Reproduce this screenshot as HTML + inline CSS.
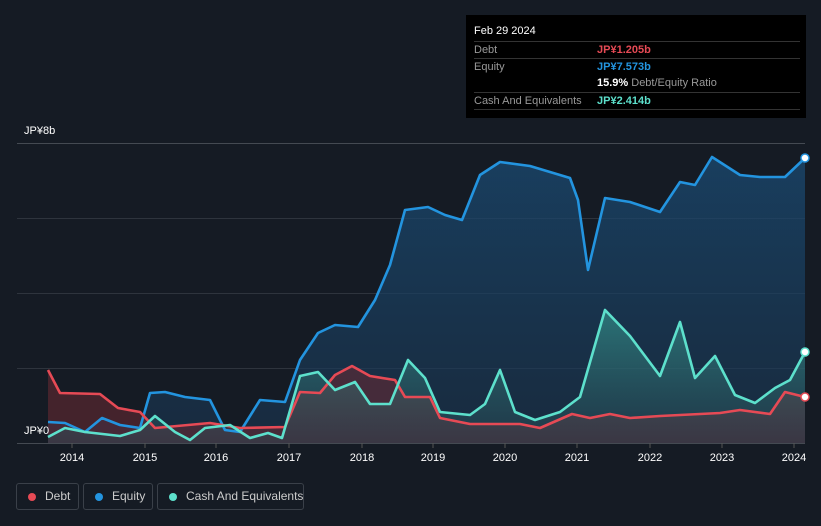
<!DOCTYPE html>
<html><head><style>
body{margin:0;width:821px;height:526px;background:#151b24;font-family:"Liberation Sans",sans-serif;overflow:hidden;position:relative}
.tt{position:absolute;left:466px;top:15px;width:340px;height:103px;background:#000;color:#fff;font-size:11px}
.tt .r{position:absolute;left:8px;right:6px;height:17px;border-top:1px solid #333;line-height:17px}
.tt .l{color:#999;position:absolute;left:0}
.tt .v{position:absolute;left:123px;font-weight:bold;white-space:nowrap}
.leg{position:absolute;top:483px;height:27px;border:1px solid #3a4049;border-radius:3px;color:#ccc;font-size:12px;line-height:25px;box-sizing:border-box;white-space:nowrap}
.leg i{position:absolute;left:11px;top:9px;width:8px;height:8px;border-radius:50%}
.leg span{position:absolute;left:28px;white-space:nowrap}
.ax{position:absolute;color:#fff;font-size:11px}
</style></head><body>
<svg width="821" height="526" style="position:absolute;left:0;top:0">
<defs>
<linearGradient id="ge" x1="0" y1="0" x2="0" y2="1"><stop offset="0" stop-color="#1a4a72" stop-opacity=".75"/><stop offset="1" stop-color="#1a3550" stop-opacity=".6"/></linearGradient>
<linearGradient id="gc" x1="0" y1="0" x2="0" y2="1"><stop offset="0" stop-color="#3aa89a" stop-opacity=".55"/><stop offset="1" stop-color="#2a4a55" stop-opacity=".4"/></linearGradient>
</defs>
<g stroke="#2e343d" stroke-width="1">
<line x1="17" y1="143.5" x2="805" y2="143.5" stroke="#444a52"/><line x1="17" y1="218.5" x2="805" y2="218.5"/><line x1="17" y1="293.5" x2="805" y2="293.5"/><line x1="17" y1="368.5" x2="805" y2="368.5"/><line x1="17" y1="443.5" x2="805" y2="443.5" stroke="#444a52"/>
</g>
<polygon fill="url(#ge)" points="48,443 48,422 65,423 85,432 102,418 120,425 140,428 150,393 165,392 185,397 210,400 225,430 240,432 260,400 285,402 300,360 318,333 335,325 358,327 375,300 390,265 405,210 428,207 445,215 462,220 480,175 500,162 530,166 570,178 578,200 588,270 605,198 630,202 660,212 680,182 695,185 712,157 740,175 760,177 785,177 805,158 805,443"/>
<polygon fill="#6b2a33" opacity=".55" points="48,443 48,370 60,393 100,394 118,408 140,412 155,428 210,423 240,428 285,427 300,392 320,393 335,375 352,366 370,376 395,380 405,397 430,397 440,418 470,424 520,424 540,428 572,414 590,418 610,414 630,418 660,416 700,414 720,413 740,410 770,414 785,392 805,397 805,443"/>
<polygon fill="url(#gc)" points="48,443 48,437 65,428 85,432 120,436 140,430 155,416 175,432 190,440 205,428 230,425 250,438 268,433 282,438 300,376 318,372 335,390 355,382 370,404 390,404 408,360 425,378 440,412 470,415 485,404 500,370 515,412 535,420 560,412 580,397 605,310 630,336 660,376 680,322 695,378 715,356 735,395 755,403 775,388 790,380 805,352 805,443"/>
<g fill="none" stroke-width="2.6" stroke-linejoin="round">
<polyline stroke="#2394df" points="48,422 65,423 85,432 102,418 120,425 140,428 150,393 165,392 185,397 210,400 225,430 240,432 260,400 285,402 300,360 318,333 335,325 358,327 375,300 390,265 405,210 428,207 445,215 462,220 480,175 500,162 530,166 570,178 578,200 588,270 605,198 630,202 660,212 680,182 695,185 712,157 740,175 760,177 785,177 805,158"/>
<polyline stroke="#e64a55" points="48,370 60,393 100,394 118,408 140,412 155,428 210,423 240,428 285,427 300,392 320,393 335,375 352,366 370,376 395,380 405,397 430,397 440,418 470,424 520,424 540,428 572,414 590,418 610,414 630,418 660,416 700,414 720,413 740,410 770,414 785,392 805,397"/>
<polyline stroke="#5de0cc" points="48,437 65,428 85,432 120,436 140,430 155,416 175,432 190,440 205,428 230,425 250,438 268,433 282,438 300,376 318,372 335,390 355,382 370,404 390,404 408,360 425,378 440,412 470,415 485,404 500,370 515,412 535,420 560,412 580,397 605,310 630,336 660,376 680,322 695,378 715,356 735,395 755,403 775,388 790,380 805,352"/>
</g>
<circle cx="805" cy="158" r="4" fill="#fff" stroke="#2394df" stroke-width="1.5"/>
<circle cx="805" cy="397" r="4" fill="#fff" stroke="#e64a55" stroke-width="1.5"/>
<circle cx="805" cy="352" r="4" fill="#fff" stroke="#5de0cc" stroke-width="1.5"/>
<g stroke="#555" stroke-width="1"><line x1="72" y1="443" x2="72" y2="448"/><line x1="145" y1="443" x2="145" y2="448"/><line x1="216" y1="443" x2="216" y2="448"/><line x1="289" y1="443" x2="289" y2="448"/><line x1="362" y1="443" x2="362" y2="448"/><line x1="433" y1="443" x2="433" y2="448"/><line x1="505" y1="443" x2="505" y2="448"/><line x1="577" y1="443" x2="577" y2="448"/><line x1="650" y1="443" x2="650" y2="448"/><line x1="722" y1="443" x2="722" y2="448"/><line x1="794" y1="443" x2="794" y2="448"/></g>
<g fill="#fff" font-size="11" font-family="Liberation Sans" text-anchor="middle"><text x="72" y="461">2014</text><text x="145" y="461">2015</text><text x="216" y="461">2016</text><text x="289" y="461">2017</text><text x="362" y="461">2018</text><text x="433" y="461">2019</text><text x="505" y="461">2020</text><text x="577" y="461">2021</text><text x="650" y="461">2022</text><text x="722" y="461">2023</text><text x="794" y="461">2024</text></g>
</svg>
<div class="ax" style="left:24px;top:125px">JP¥8b</div>
<div class="ax" style="left:24px;top:425px">JP¥0</div>
<div class="tt">
<div style="position:absolute;left:8px;top:10px">Feb 29 2024</div>
<div class="r" style="top:26px"><span class="l">Debt</span><span class="v" style="color:#e64a55">JP¥1.205b</span></div>
<div class="r" style="top:43px"><span class="l">Equity</span><span class="v" style="color:#2394df">JP¥7.573b</span></div>
<div class="r" style="top:60px;border-top:none"><span class="v">15.9% <span style="color:#999;font-weight:normal">Debt/Equity Ratio</span></span></div>
<div class="r" style="top:77px"><span class="l">Cash And Equivalents</span><span class="v" style="color:#5de0cc">JP¥2.414b</span></div>
<div class="r" style="top:94px;height:0"></div>
</div>
<div class="leg" style="left:16px;width:63px"><i style="background:#e64a55"></i><span>Debt</span></div>
<div class="leg" style="left:83px;width:70px"><i style="background:#2394df"></i><span>Equity</span></div>
<div class="leg" style="left:157px;width:147px"><i style="background:#5de0cc"></i><span>Cash And Equivalents</span></div>
</body></html>
